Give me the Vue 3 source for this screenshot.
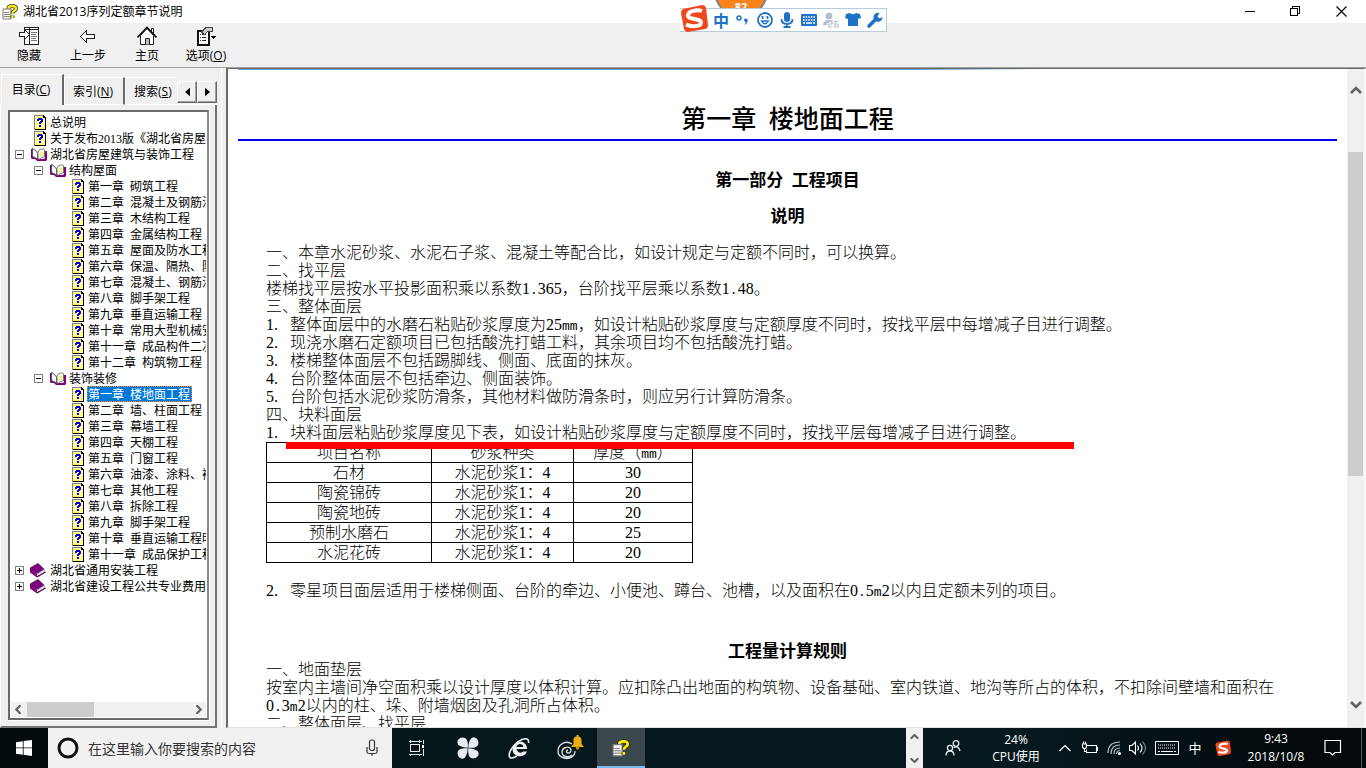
<script setup>
import { ref } from 'vue'

const E = '\u2002'
const tree = ref([
  { lvl: 0, kind: 'page', text: '总说明' },
  { lvl: 0, kind: 'page', text: '关于发布2013版《湖北省房屋建筑与装饰工程》' },
  { lvl: 0, kind: 'open', text: '湖北省房屋建筑与装饰工程' },
  { lvl: 1, kind: 'open', text: '结构屋面' },
  { lvl: 2, kind: 'page', text: `第一章${E}砌筑工程` },
  { lvl: 2, kind: 'page', text: `第二章${E}混凝土及钢筋混凝土工程` },
  { lvl: 2, kind: 'page', text: `第三章${E}木结构工程` },
  { lvl: 2, kind: 'page', text: `第四章${E}金属结构工程` },
  { lvl: 2, kind: 'page', text: `第五章${E}屋面及防水工程` },
  { lvl: 2, kind: 'page', text: `第六章${E}保温、隔热、防腐工程` },
  { lvl: 2, kind: 'page', text: `第七章${E}混凝土、钢筋混凝土构件` },
  { lvl: 2, kind: 'page', text: `第八章${E}脚手架工程` },
  { lvl: 2, kind: 'page', text: `第九章${E}垂直运输工程` },
  { lvl: 2, kind: 'page', text: `第十章${E}常用大型机械安拆` },
  { lvl: 2, kind: 'page', text: `第十一章${E}成品构件二次运输` },
  { lvl: 2, kind: 'page', text: `第十二章${E}构筑物工程` },
  { lvl: 1, kind: 'open', text: '装饰装修' },
  { lvl: 2, kind: 'page', text: `第一章${E}楼地面工程`, selected: true },
  { lvl: 2, kind: 'page', text: `第二章${E}墙、柱面工程` },
  { lvl: 2, kind: 'page', text: `第三章${E}幕墙工程` },
  { lvl: 2, kind: 'page', text: `第四章${E}天棚工程` },
  { lvl: 2, kind: 'page', text: `第五章${E}门窗工程` },
  { lvl: 2, kind: 'page', text: `第六章${E}油漆、涂料、裱糊工程` },
  { lvl: 2, kind: 'page', text: `第七章${E}其他工程` },
  { lvl: 2, kind: 'page', text: `第八章${E}拆除工程` },
  { lvl: 2, kind: 'page', text: `第九章${E}脚手架工程` },
  { lvl: 2, kind: 'page', text: `第十章${E}垂直运输工程明细` },
  { lvl: 2, kind: 'page', text: `第十一章${E}成品保护工程` },
  { lvl: 0, kind: 'closed', text: '湖北省通用安装工程' },
  { lvl: 0, kind: 'closed', text: '湖北省建设工程公共专业费用' }
])

// Splits a line into runs so that unit letters and decimal points use the half-width face.
const runs = (s) => s.split(/([.m]+)/).filter(Boolean).map((t) => ({ t, mono: /^[.m]+$/.test(t) }))

const lines = [
  { text: '一、本章水泥砂浆、水泥石子浆、混凝土等配合比，如设计规定与定额不同时，可以换算。' },
  { text: '二、找平层' },
  { text: '楼梯找平层按水平投影面积乘以系数1.365，台阶找平层乘以系数1.48。' },
  { text: '三、整体面层' },
  { no: '1.', text: '整体面层中的水磨石粘贴砂浆厚度为25mm，如设计粘贴砂浆厚度与定额厚度不同时，按找平层中每增减子目进行调整。' },
  { no: '2.', text: '现浇水磨石定额项目已包括酸洗打蜡工料，其余项目均不包括酸洗打蜡。' },
  { no: '3.', text: '楼梯整体面层不包括踢脚线、侧面、底面的抹灰。' },
  { no: '4.', text: '台阶整体面层不包括牵边、侧面装饰。' },
  { no: '5.', text: '台阶包括水泥砂浆防滑条，其他材料做防滑条时，则应另行计算防滑条。' },
  { text: '四、块料面层' },
  { no: '1.', text: '块料面层粘贴砂浆厚度见下表，如设计粘贴砂浆厚度与定额厚度不同时，按找平层每增减子目进行调整。' }
]
const note = [{ no: '2.', text: '零星项目面层适用于楼梯侧面、台阶的牵边、小便池、蹲台、池槽，以及面积在0.5m2以内且定额未列的项目。' }]
const rules = [
  { text: '一、地面垫层' },
  { text: '按室内主墙间净空面积乘以设计厚度以体积计算。应扣除凸出地面的构筑物、设备基础、室内铁道、地沟等所占的体积，不扣除间壁墙和面积在0.3m2以内的柱、垛、附墙烟囱及孔洞所占体积。' },
  { text: '二、整体面层、找平层' }
]
const rows = [
  ['石材', '30'],
  ['陶瓷锦砖', '20'],
  ['陶瓷地砖', '20'],
  ['预制水磨石', '25'],
  ['水泥花砖', '20']
]
const query = ref('')
</script>

<template>
  <div class="screen">
    <svg class="defs" aria-hidden="true">
      <symbol id="i-help" viewBox="0 0 16 16">
        <path d="M1 5h8v10H1z" fill="#fff" stroke="#777" />
        <path d="M2 8.5h5M2 10.5h6M2 12.5h6" stroke="#888" />
        <path d="M6.5 4.500C6.500 1.500 14 1 14 4.500C14 7 10.500 6.500 10.500 9.500M10.500 11.500v2.500" fill="none" stroke="#333" stroke-width="4" />
        <path d="M6.500 4.500C6.500 1.500 14 1 14 4.500C14 7 10.500 6.500 10.500 9.500M10.500 11.500v2.500" fill="none" stroke="#ffee00" stroke-width="2.400" />
      </symbol>
      <symbol id="i-page" viewBox="0 0 12 15">
        <path d="M0 0h9l3 3v12H0z" fill="#808080" />
        <path d="M1 1h8v2h2v11H1z" fill="#fffcb0" />
        <path d="M11 3h1v12H1v-1h10z" fill="#000" />
        <path d="M9 0h1v1h1v1h1v1h-3z" fill="#000" />
        <path d="M2 2.500h6M2 6.500h1M9 5.500h1M2 8.500h3M8 9.500h2M2 11.500h2M8 12.500h2M2 13.500h5" stroke="#ffff30" />
        <path d="M3 6V4h1V3h4v1h1v3H8v1H7v1H5V7h1V6h1V5H5v1zM5 10h2v2H5z" fill="#0000f0" />
      </symbol>
      <symbol id="i-open" viewBox="0 0 16 14">
        <path d="M0 2h2v8l4 1 1 1h6l1-1V4h2v9l-1 1H6l-2-2H1l-1-1z" fill="#800080" />
        <path d="M1.500 1.500L4 3l2.500 3v6L4 10.500l-2.500-1z" fill="#fff" stroke="#555" />
        <path d="M7 12V5l2-3 1.500.5L12 1.500l1.500 1v7.500l-3 .5L9 12z" fill="#fff" stroke="#777" />
        <path d="M9.500 5v5M11.500 4v5" stroke="#fff04a" stroke-width="1.200" />
      </symbol>
      <symbol id="i-closed" viewBox="0 0 16 15">
        <path d="M0 5L8 .5l6 5.500-7 4.500L0 7z" fill="#800080" stroke="#300030" stroke-width=".6" />
        <path d="M0 6.500l7 4.500v3.500L0 9.500z" fill="#800080" />
        <path d="M7.500 11l7-4.500v2l-6.500 4.500z" fill="#fff" stroke="#777" stroke-width=".6" />
        <path d="M7 14l8.500-5" stroke="#500050" stroke-width="1.200" />
      </symbol>
      <symbol id="i-sogou" viewBox="0 0 28 28">
        <path d="M3 5L22 1q3 0 4 3l2 17q0 3-3 4L8 28q-3 0-4-3L1 9q0-3 2-4z" fill="#f0481c" />
        <path d="M22 7C17 5 8 7 8 11.500S21 14 21 18.500 11 23 6 20.500" fill="none" stroke="#fff" stroke-width="4" />
      </symbol>
      <symbol id="i-up" viewBox="0 0 12 8"><path d="M1 7l5-5 5 5" fill="none" stroke="#606060" stroke-width="2.600" /></symbol>
    </svg>

    <main class="window">
      <header class="titlebar">
        <svg class="app-icon" viewBox="0 0 16 16"><use href="#i-help" /></svg>
        <h1 class="app-name">湖北省2013序列定额章节说明</h1>
        <div class="win-btns">
          <button type="button" aria-label="最小化"><svg viewBox="0 0 11 11"><path d="M.5 5.500h10" stroke="#000" /></svg></button>
          <button type="button" aria-label="还原"><svg viewBox="0 0 11 11"><path d="M.5 2.500h7v7h-7zM2.500 2.500v-2h7v7h-2" fill="none" stroke="#000" /></svg></button>
          <button type="button" aria-label="关闭"><svg viewBox="0 0 11 11" class="smooth"><path d="M.5.500l10 10M10.500.500l-10 10" stroke="#000" stroke-width="1.200" /></svg></button>
        </div>
      </header>

      <nav class="toolbar" aria-label="工具栏">
        <button type="button">
          <svg viewBox="0 0 20 20">
            <path d="M5.500 1.500h14v17h-14zM10.500 2v16" fill="#fff" stroke="#222" />
            <path d="M6 3.500h13" stroke="#222" />
            <path d="M12 6.500h6M12 8.500h5M12 10.500h6M12 12.500h5M12 14.500h6" stroke="#777" />
            <path d="M.5 6.500h5v-3l5 5-5 5v-3h-5z" fill="#fff" stroke="#222" />
          </svg><span>隐藏</span>
        </button>
        <button type="button">
          <svg viewBox="0 0 20 20"><path d="M2.500 10.500l6-6v4h8v4h-8v4z" fill="#fff" stroke="#222" /></svg><span>上一步</span>
        </button>
        <button type="button">
          <svg viewBox="0 0 20 20" class="smooth">
            <path d="M14.500 7V2.500h2V8" fill="#fff" stroke="#222" />
            <path d="M3.500 9.500v9h13v-9l-6.500-7z" fill="#fff" stroke="#222" />
            <path d="M0.500 11.500L10 1.500l9.500 10" fill="none" stroke="#111" stroke-width="1.600" />
            <path d="M8.500 18.500v-6h4v6" fill="#bbb" stroke="#222" />
          </svg><span>主页</span>
        </button>
        <button type="button">
          <svg viewBox="0 0 20 20">
            <path d="M1.500 4.500h11v14h-11z" fill="#fff" stroke="#111" stroke-width="2" />
            <path d="M4 8.500h1M6 8.500h4M4 11.500h1M6 11.500h4M4 14.500h1M6 14.500h4" stroke="#333" />
            <path d="M5.500 6l4-4 7-.5v4l-5 0-3 3z" fill="#ccc" stroke="#444" />
            <path d="M15 10h5l-2.500 3z" fill="#000" />
          </svg><span>选项(<u>O</u>)</span>
        </button>
      </nav>

      <div class="work">
        <aside class="side">
          <div class="tabs" role="tablist">
            <button type="button" role="tab" class="tab active" aria-selected="true">目录(<u>C</u>)</button>
            <button type="button" role="tab" class="tab">索引(<u>N</u>)</button>
            <button type="button" role="tab" class="tab last">搜索(<u>S</u>)</button>
            <div class="tab-scroll">
              <button type="button" aria-label="向左"><svg viewBox="0 0 6 10"><path d="M6 0v10L0 5z" /></svg></button>
              <button type="button" aria-label="向右"><svg viewBox="0 0 6 10"><path d="M0 0v10l6-5z" /></svg></button>
            </div>
          </div>
          <div class="panel">
            <div class="treebox">
              <ul class="tree">
                <li v-for="(n, i) in tree" :key="i" :class="['lvl' + n.lvl]">
                  <span class="exp">
                    <svg v-if="n.kind !== 'page'" viewBox="0 0 9 9">
                      <path d="M.5.500h8v8h-8z" fill="#fff" stroke="#808080" />
                      <path :d="n.kind === 'open' ? 'M2 4.500h5' : 'M2 4.500h5M4.500 2v5'" stroke="#000" />
                    </svg>
                  </span>
                  <span class="ico">
                    <svg :class="n.kind"><use :href="'#i-' + n.kind" /></svg>
                  </span>
                  <a href="#" :class="{ selected: n.selected }">{{ n.text }}</a>
                </li>
              </ul>
              <div class="hscroll">
                <svg class="left" viewBox="0 0 12 8"><use href="#i-up" /></svg>
                <div class="htrack"><div class="hthumb"></div></div>
                <svg class="right" viewBox="0 0 12 8"><use href="#i-up" /></svg>
              </div>
            </div>
          </div>
        </aside>

        <section class="view">
          <article class="doc">
            <div class="topline"></div>
            <h2>第一章{{ E }}楼地面工程</h2>
            <div class="body">
              <h3>第一部分{{ E }}工程项目</h3>
              <h3>说明</h3>
              <p v-for="(l, i) in lines" :key="i"><span v-if="l.no" class="no">{{ l.no }}</span><span v-for="(r, j) in runs(l.text)" :key="j" :class="{ mono: r.mono }">{{ r.t }}</span></p>
              <div class="tablewrap">
                <table>
                  <thead>
                    <tr><th class="c1">项目名称</th><th class="c2">砂浆种类</th><th class="c3">厚度（<span class="mono">mm</span>）</th></tr>
                  </thead>
                  <tbody>
                    <tr v-for="r in rows" :key="r[0]"><td>{{ r[0] }}</td><td>水泥砂浆1：4</td><td>{{ r[1] }}</td></tr>
                  </tbody>
                </table>
                <div class="redline"></div>
              </div>
              <p v-for="(l, i) in note" :key="'n' + i"><span class="no">{{ l.no }}</span><span v-for="(r, j) in runs(l.text)" :key="j" :class="{ mono: r.mono }">{{ r.t }}</span></p>
              <h3 class="rules">工程量计算规则</h3>
              <p v-for="(l, i) in rules" :key="'r' + i"><span v-for="(r, j) in runs(l.text)" :key="j" :class="{ mono: r.mono }">{{ r.t }}</span></p>
            </div>
          </article>
          <div class="vscroll">
            <svg viewBox="0 0 12 8"><use href="#i-up" /></svg>
            <div class="vtrack"><div class="vthumb"></div></div>
            <svg class="down" viewBox="0 0 12 8"><use href="#i-up" /></svg>
          </div>
        </section>
      </div>
    </main>

    <div class="ball">82</div>
    <div class="ime">
      <svg class="sogou" viewBox="0 0 28 28"><use href="#i-sogou" /></svg>
      <span class="zh">中</span>
      <svg viewBox="0 0 18 18"><circle cx="5" cy="7" r="2" fill="none" stroke="#1e73c8" stroke-width="1.500" /><path d="M10 8.500a2 2 0 1 1 3.500 2q-.5 2.500-3 3.500 1.500-2 1-3-1.500-.5-1.500-2.500z" fill="#1e73c8" /></svg>
      <svg viewBox="0 0 18 18"><circle cx="9" cy="9" r="7" fill="none" stroke="#1e73c8" stroke-width="1.800" /><path d="M5.500 10q3.500 5.500 7 0z" fill="none" stroke="#1e73c8" stroke-width="1.300" /><path d="M6.500 5v3M11.500 5v3" stroke="#1e73c8" stroke-width="1.800" /></svg>
      <svg viewBox="0 0 18 18"><rect x="6" y="1" width="6" height="10" rx="3" fill="#1e73c8" /><path d="M3.500 8q0 5 5.500 5t5.500-5M9 13v3M5.500 16h7" fill="none" stroke="#1e73c8" stroke-width="1.800" /></svg>
      <svg viewBox="0 0 18 18"><rect x="1" y="3" width="16" height="12" rx="1" fill="#1e73c8" /><path d="M3 6h12M3 9h12" stroke="#fff" stroke-width="1.600" stroke-dasharray="1.600 1" /><path d="M3 12h2M6 12h6M13 12h2" stroke="#fff" stroke-width="1.600" /></svg>
      <svg viewBox="0 0 18 18"><circle cx="7" cy="5" r="3.500" fill="#b4bfd4" /><path d="M1 14q0-5 6-5t6 5z" fill="#b4bfd4" /><path d="M7 11.500h3v2H7v2.500h3.500M13 11v5h3v-3h-3" fill="none" stroke="#fff" stroke-width="3" /><path d="M7 10.500h3v2.500H7v3h3.500M16 10.500h-3v5.500h3v-3h-3" fill="none" stroke="#b4bfd4" stroke-width="1.200" /></svg>
      <svg viewBox="0 0 18 18"><path d="M2 3l4-1q3 2.500 6 0l4 1 1 4-3 1v7H4V8L1 7z" fill="#1e73c8" /></svg>
      <svg viewBox="0 0 18 18"><path d="M3 15l7-7" stroke="#1e73c8" stroke-width="3.600" stroke-linecap="round" /><path d="M13.500 2A4.500 4.500 0 1 0 16.500 6l-3 1.500-2-2z" fill="#1e73c8" /></svg>
    </div>

    <footer class="taskbar">
      <button type="button" class="start" aria-label="开始">
        <svg viewBox="0 0 16 16"><path d="M0 2.200L6.800 1.200V7.500H0zM7.600 1.100L16 0V7.500H7.600zM0 8.300h6.800v6.400L0 13.800zM7.600 8.300H16V16L7.600 14.800z" fill="#fff" /></svg>
      </button>
      <div class="search">
        <svg class="ring" viewBox="0 0 22 22"><circle cx="11" cy="11" r="9" fill="none" stroke="#111" stroke-width="3" /></svg>
        <input v-model="query" type="text" placeholder="在这里输入你要搜索的内容" aria-label="搜索" />
        <svg class="mic" viewBox="0 0 12 18"><rect x="3.500" y="1" width="5" height="10.500" rx="2" fill="none" stroke="#333" stroke-width="1.200" /><path d="M1 8v5q0 1.500 2 1.500h6q2 0 2-1.500V8M6 14.500V17" fill="none" stroke="#333" stroke-width="1.200" /></svg>
      </div>
      <button type="button" class="app views" aria-label="任务视图"><svg viewBox="0 0 16 16"><path d="M2.500 4.500h9v7h-9zM.5 1.500h13M.5 14.500h13M2.500 0v2.500M11.500 0v2.500M2.500 13.500V16M11.500 13.500V16" fill="none" stroke="#e6e9ea" /><path d="M15.500 0v4M15.500 9v7" stroke="#e6e9ea" /><path d="M14 4.500h2v3h-2z" fill="#fff" /></svg></button>
      <button type="button" class="app" aria-label="速度"><svg viewBox="0 0 22 22"><g fill="#e8ecee"><path d="M10.700 10.700Q11.500 3 8 1 3.500-.5 1 3q-2 4 2 6 3.500 1.700 7.700 1.700z" /><path d="M11.300 10.700Q19 11.500 21 8q1.500-4.500-2-7-4-2-6 2-1.700 3.500-1.700 7.700z" /><path d="M11.300 11.300Q10.500 19 14 21q4.500 1.500 7-2 2-4-2-6-3.500-1.700-7.700-1.700z" /><path d="M10.700 11.300Q3 10.500 1 14q-1.500 4.500 2 7 4 2 6-2 1.700-3.500 1.700-7.700z" /></g></svg></button>
      <button type="button" class="app" aria-label="浏览器"><svg viewBox="0 0 22 22"><path d="M12 4.500a7 7 0 0 1 7 7.500H8.500c.5 4 5.500 4.500 6.500 2.500h4C16 22 4.500 20.500 4.500 12A7.500 7.500 0 0 1 12 4.500z" fill="#f2f2f2" /><path d="M8.500 10h7c-.5-4-6.500-4-7 0z" fill="#06171c" /><path d="M20.500 6C21.500 0 15 1 9 5.500 3 10.500-.5 18 2 20.500c2 1.500 5-.5 7-1.500" fill="none" stroke="#f2f2f2" stroke-width="1.600" /></svg></button>
      <button type="button" class="app" aria-label="提醒"><svg class="big" viewBox="0 0 28 28"><path d="M12 16c-2 0-2 3 0 3 3 0 4-3 2-5-3-2-8 0-8 4 0 5 7 6 10 3M16 10C10 6 2 10 2 17c0 7 9 9 14 6M7 23c5 3 12 0 12-6" fill="none" stroke="#d5dadb" stroke-width="1.400" /><path d="M15 13h13l-2.500-3V6q-.5-3.500-3-3.500V1h-2v1.500q-3 0-3 3.500v4z" fill="#e9ae10" /><circle cx="21.500" cy="14" r="1.800" fill="#c98e00" /></svg></button>
      <button type="button" class="app current" aria-label="帮助"><svg viewBox="0 0 16 16"><use href="#i-help" /></svg></button>
      <div class="grow"></div>
      <div class="spin">
        <svg viewBox="0 0 12 8"><use href="#i-up" /></svg>
        <svg class="down" viewBox="0 0 12 8"><use href="#i-up" /></svg>
      </div>
      <div class="tray">
        <svg class="people" viewBox="0 0 16 16"><g fill="none" stroke="#e6e9ea" stroke-width="1.300"><circle cx="5" cy="8" r="2.600" /><path d="M1 15.500q0-4.500 4-4.500t4 4.500" /><circle cx="11" cy="3.500" r="2.800" /><path d="M8.500 7.500q5-2.500 6.500 3.500" /></g></svg>
        <div class="cpu">24%<br />CPU使用</div>
        <svg class="chev" viewBox="0 0 12 8"><path d="M.5 7L6 1.500 11.500 7" fill="none" stroke="#fff" stroke-width="1.200" /></svg>
        <svg class="t18" viewBox="0 0 18 14"><path d="M5.500 4.500h10v7h-10v-3M15.500 6.500h1v3h-1M1.500 3v2.500q0 2 2 2t2-2V3zM2.500 3V.500M4.500 3V.500M3.500 7.500v3h2" fill="none" stroke="#fff" stroke-width="1.100" /></svg>
        <svg class="t14" viewBox="0 0 14 14"><g fill="none" stroke="#b9c1c3" stroke-width="1.200"><path d="M1 12Q1 1 13 1" /><path d="M4 13Q4 4 13 4" /><path d="M7 13Q7 7 13 7" /><path d="M9.500 13q0-3 3.500-3.500" /></g><circle cx="12.500" cy="12.500" r="1.500" fill="#fff" /></svg>
        <svg class="t18" viewBox="0 0 18 14"><g fill="none" stroke="#fff" stroke-width="1.100"><path d="M.5 4.500h2.500L6.500 1v12L3 9.500H.5z" /><path d="M8.500 4.500q2 2.500 0 5M11 2.500q4 4.500 0 9" /><path d="M13.500.500q6 6.500 0 13" stroke="#7f8a8d" /></g></svg>
        <svg class="kbd" viewBox="0 0 24 14"><path d="M.5.500h23v13H.5z" fill="none" stroke="#fff" /><path d="M3 4h18M3 7h18" stroke="#fff" stroke-dasharray="1 1" stroke-width="1.200" /><path d="M3 10.500h2M6 10.500h12M19 10.500h2" stroke="#fff" /></svg>
        <span class="lang">中</span>
        <svg class="t16" viewBox="0 0 28 28"><use href="#i-sogou" /></svg>
        <div class="clock">9:43<br />2018/10/8</div>
        <button type="button" class="note" aria-label="通知"><svg viewBox="0 0 18 18"><path d="M1 1.500h15.500v12H11L8.500 16 6 13.500H1z" fill="none" stroke="#fff" stroke-width="1.200" /></svg></button>
        <div class="peek"></div>
      </div>
    </footer>
  </div>
</template>

<style>
html, body { margin: 0; overflow: hidden; }
</style>

<style scoped>
.screen {
  position: relative;
  height: 100vh;
  display: flex;
  flex-direction: column;
  overflow: hidden;
  background: #f0f0f0;
  color: #000;
  font: 12px/16px "Open Sans", "Noto Sans CJK SC", sans-serif;
  text-spacing-trim: space-all;
}
.defs { position: absolute; width: 0; height: 0; }
button { margin: 0; padding: 0; border: 0; background: none; font: inherit; color: inherit; }
svg { display: block; flex: none; }
.window { flex: 1; min-height: 0; display: flex; flex-direction: column; }

.titlebar { flex: none; height: 23px; display: flex; align-items: center; background: #fff; padding-left: 2px; }
.app-icon { width: 16px; height: 16px; }
.app-name { flex: 1; margin: 0 0 0 5px; font-size: 12px; font-weight: 400; }
.win-btns { display: flex; padding-right: 2px; }
.win-btns button { width: 46px; height: 22px; display: flex; align-items: center; justify-content: center; }
.win-btns svg { width: 11px; height: 11px; shape-rendering: crispEdges; }
.win-btns svg.smooth, .toolbar svg.smooth { shape-rendering: auto; }

.toolbar { flex: none; height: 44px; display: flex; border-bottom: 1px solid #a0a0a0; }
.toolbar button { width: 59px; display: flex; flex-direction: column; align-items: center; padding: 3px 1px 0 0; gap: 2px; white-space: nowrap; box-sizing: border-box; }
.toolbar svg { width: 20px; height: 20px; shape-rendering: crispEdges; }

.work { flex: 1; min-height: 0; display: flex; }
.side { flex: none; width: 222px; display: flex; flex-direction: column; padding: 6px 4px 0 1px; border-right: 1px solid #fff; box-sizing: border-box; }
.tabs { height: 31px; display: flex; align-items: flex-end; flex: none; }
.tab { height: 28px; width: 61px; box-sizing: border-box; padding: 2px 2px 0 0; border: solid; border-width: 1px 2px 1px 1px; border-color: #fff #696969 #fff #fff; white-space: nowrap; }
.tab.active { height: 31px; width: 63px; border-bottom: 0; padding: 0 2px 1px 0; }
.tab.last { width: 52px; padding-left: 8px; text-align: left; overflow: hidden; border-right: 0; }
.tab-scroll { flex: 1; height: 28px; padding-top: 4px; display: flex; border-bottom: 1px solid #fff; box-sizing: border-box; }
.tab-scroll button { width: 20px; height: 22px; box-sizing: border-box; border: 1px solid; border-color: #fff #696969 #696969 #fff; box-shadow: inset -1px -1px #a0a0a0; display: flex; align-items: center; justify-content: center; }
.tab-scroll svg { width: 5px; height: 10px; }
.panel { flex: 1; min-height: 0; display: flex; padding: 5px 6px 6px 7px; border: solid; border-width: 0 2px 2px 1px; border-color: #747474 #747474 #747474 #fff; margin-left: -1px; }
.treebox { flex: 1; min-width: 0; display: flex; flex-direction: column; background: #fff; border: 2px solid #696969; border-right-color: #8a8a8a; padding: 0 1px 1px; box-shadow: 1px 1px #fff; }
.tree { flex: 1; min-height: 0; overflow: hidden; list-style: none; margin: 0; padding: 2px 0 0; font: 12px/16px "Liberation Serif", "Noto Sans CJK SC", serif; }
.tree li { height: 16px; display: flex; align-items: center; white-space: nowrap; }
.lvl1 { padding-left: 19px; }
.lvl2 { padding-left: 38px; }
.exp { flex: none; width: 19px; padding-left: 4px; box-sizing: border-box; }
.exp svg { width: 9px; height: 9px; shape-rendering: crispEdges; }
.ico { flex: none; width: 19px; display: flex; }
.ico .page { width: 12px; height: 15px; margin-left: 4px; shape-rendering: crispEdges; }
.ico .open { width: 16px; height: 14px; margin-left: 1px; }
.ico .closed { width: 16px; height: 15px; }
.tree a { color: #000; text-decoration: none; line-height: 18px; height: 16px; padding: 0 2px 0 1px; }
.tree a.selected { background: #0078d7; color: #fff; outline: 1px dotted #ff8728; outline-offset: -1px; }
.hscroll { flex: none; height: 15px; background: #f0f0f0; display: flex; align-items: center; padding: 0 2px; }
.hscroll svg { width: 10px; height: 7px; }
.hscroll .left { transform: rotate(-90deg); }
.hscroll .right { transform: rotate(90deg); }
.htrack { flex: 1; height: 15px; padding: 0 3px 0 4px; }
.hthumb { width: 41%; height: 15px; background: #cdcdcd; }

.view { flex: 1; min-width: 0; margin-left: 4px; display: flex; background: #fff; border: solid; border-width: 1px 2px 1px 2px; border-color: #696969 #f8f8f8 #e3e3e3 #696969; }
.doc { flex: 1; min-width: 0; overflow: hidden; padding: 0 10px; font: 16px/18px "Liberation Serif", "Noto Sans CJK SC", serif; font-weight: 300; }
.topline { height: 1px; background: linear-gradient(90deg, #6ea5d8 85%, #fff); width: 73%; }
.doc h2 { margin: 34px 0 0; padding-bottom: 3px; font-size: 25px; line-height: 32px; text-align: center; font-weight: 500; border-bottom: 2px solid #00f; }
.body { padding: 31px 28px 0; }
.doc h3 { margin: 0 0 18px; font-size: 17px; line-height: 18px; text-align: center; }
.doc h3.rules { margin: 43px 0 0; }
.doc p { margin: 0; }
.mono { font-family: "Liberation Mono", monospace; font-size: 13px; line-height: 1px; }
.no { display: inline-block; width: 24px; }
.tablewrap { position: relative; margin: 0 0 19px; }
table { border-collapse: collapse; table-layout: fixed; width: 427px; }
th, td { border: 1px solid #000; padding: 0; text-align: center; font-weight: inherit; line-height: 19px; }
.c1 { width: 164px; }
.c2 { width: 141px; }
.c3 { width: 118px; }
.redline { position: absolute; left: 20px; top: 0; width: 788px; height: 7px; background: #f00; }

.vscroll { flex: none; width: 17px; box-sizing: border-box; background: #f0f0f0; display: flex; flex-direction: column; align-items: center; padding: 17px 1px 18px; }
.vscroll svg { width: 12px; height: 8px; }
.down { transform: rotate(180deg); }
.vtrack { flex: 1; width: 15px; padding-top: 58px; box-sizing: border-box; }
.vthumb { height: 59%; background: #cdcdcd; }

.ball { position: absolute; left: 714px; top: -36px; width: 50px; height: 40px; padding-top: 10px; box-sizing: content-box; border: 2px solid #7d8388; border-radius: 50%; background: #fa8219; color: #fff; font: bold 11px/62px "Open Sans", sans-serif; text-align: center; }
.ime { position: absolute; left: 680px; top: 8px; width: 207px; height: 24px; box-sizing: border-box; display: flex; align-items: center; gap: 4px; background: #fff; border: 1px solid #b5cbe0; border-left: 0; }
.ime svg { width: 18px; height: 18px; }
.ime .sogou { width: 28px; height: 28px; margin-top: -4px; }
.ime .zh { width: 18px; text-align: center; font: bold 16px/20px "Noto Sans CJK SC", sans-serif; color: #1e73c8; }

.taskbar { flex: none; height: 40px; display: flex; align-items: stretch; background: linear-gradient(90deg, #050b0d, #06171c 30%, #06191f 75%, #04090b 97%); color: #fff; }
.start { width: 48px; display: flex; align-items: center; justify-content: center; }
.start svg { width: 16px; height: 16px; }
.search { width: 344px; display: flex; align-items: center; background: #f1f1f1; box-sizing: border-box; padding: 0 14px 0 9px; }
.ring { width: 22px; height: 22px; }
.search input { flex: 1; min-width: 0; margin: 0 0 0 9px; padding: 2px 0 0; border: 0; background: none; outline: 0; font: 14px/20px "Open Sans", "Noto Sans CJK SC", sans-serif; }
.search input::placeholder { color: #333; opacity: 1; }
.mic { width: 12px; height: 18px; }
.app { width: 51px; display: flex; align-items: center; justify-content: center; }
.app svg { width: 22px; height: 22px; }
.app.views { width: 48px; margin-right: 2px; }
.app.views svg { width: 16px; height: 16px; shape-rendering: crispEdges; }
.app .big { width: 28px; height: 28px; }
.app.current { width: 48px; margin-left: 2px; background: #3a474c; box-shadow: inset 0 -2px #76b9ed; }
.app.current svg { width: 18px; height: 18px; }
.grow { flex: 1; }
.spin { width: 17px; background: #f0f0f0; display: flex; flex-direction: column; justify-content: space-between; align-items: center; padding: 5px 0 4px; box-sizing: border-box; }
.spin svg { width: 9px; height: 7px; }
.tray { display: flex; align-items: center; padding-left: 22px; }
.people { width: 16px; height: 16px; }
.cpu { width: 50px; margin: 0 18px 0 30px; text-align: center; line-height: 17px; white-space: nowrap; }
.chev { width: 12px; height: 8px; margin-right: 10px; }
.t18 { width: 18px; height: 14px; margin-right: 8px; }
.t14 { width: 14px; height: 14px; margin-right: 8px; }
.t16 { width: 16px; height: 16px; }
.kbd { width: 24px; height: 14px; margin-right: 8px; }
.lang { width: 16px; text-align: center; margin-right: 12px; font-size: 13px; }
.clock { width: 62px; margin: 0 17px 0 14px; text-align: center; line-height: 18px; white-space: nowrap; }
.note { width: 18px; margin-right: 19px; }
.note svg { width: 18px; height: 18px; }
.peek { width: 4px; height: 40px; border-left: 1px solid #555c5f; }
</style>
